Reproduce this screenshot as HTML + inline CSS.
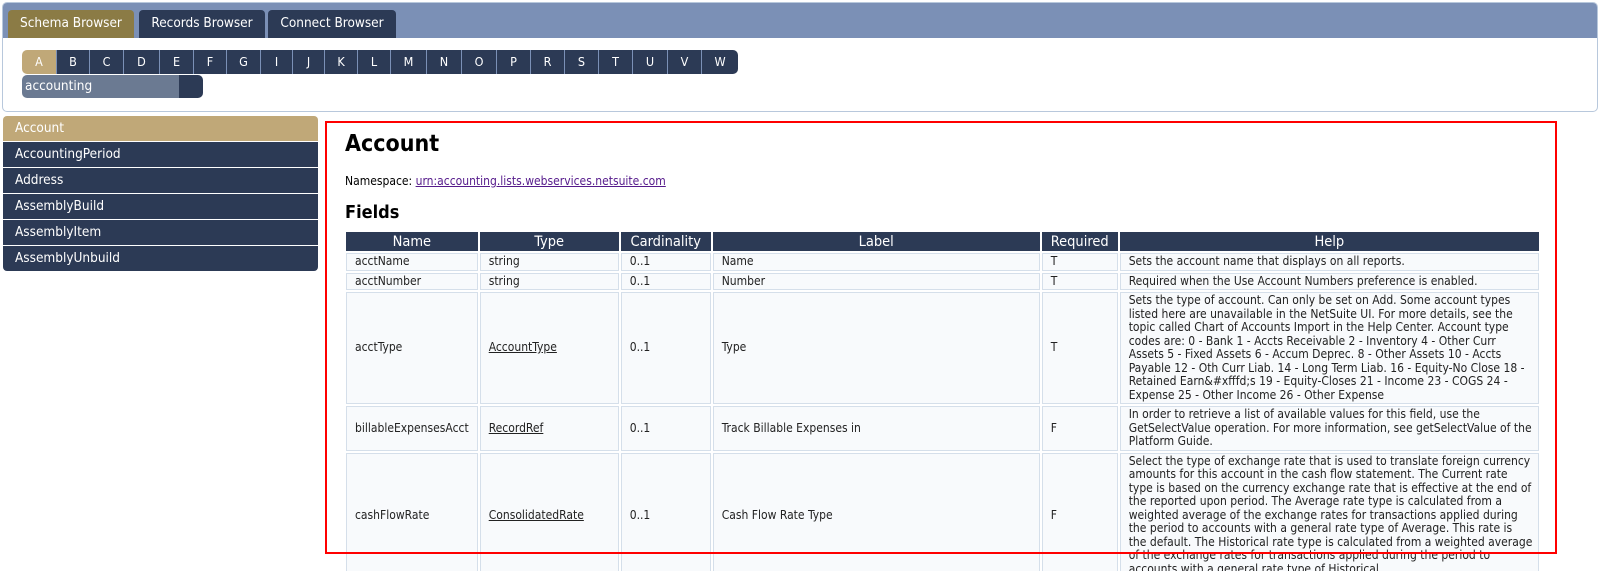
<!DOCTYPE html>
<html style="width:1600px;height:571px;overflow:hidden"><head><meta charset="utf-8"><style>
*{box-sizing:border-box;margin:0;padding:0}
body{width:1600px;height:571px;overflow:hidden;background:#fff;font-family:"DejaVu Sans Condensed","Liberation Sans",sans-serif;font-size:12px;color:#222;position:relative}
#wrap{position:absolute;left:0;top:0;width:1600px;height:571px;overflow:hidden}
.a{position:absolute}
#hdr{left:2px;top:2px;width:1596px;height:110px;border:1px solid #b8c8dc;border-radius:5px}
#tabbar{left:3px;top:3px;width:1594px;height:35px;background:#7b90b6;border-radius:4px 4px 0 0}
.tab{top:10px;height:28px;color:#fff;font-size:13.5px;line-height:27px;text-align:center;border-radius:4px 4px 0 0;background:#2c3a55}
.let{top:50px;height:24px;background:#2c3a55;color:#fff;font-size:12.5px;line-height:24px;text-align:center;border-right:1px solid #7b90b6}
.side{left:3px;width:315px;height:25px;background:#2c3a55;color:#fff;font-size:13.5px;line-height:24px;padding-left:12px}
#box{left:325px;top:121px;width:1232px;height:433px;border:2px solid #ff0000}
table{position:absolute;left:344px;top:230px;border-collapse:separate;border-spacing:2px;width:1197px}
th{background:#2c3a55;color:#fff;font-weight:normal;font-size:14.5px;height:19px;line-height:18px;padding:0}
td{background:#f8fafc;border:1px solid #d5dfea;padding:0 8px;line-height:13.5px;font-size:12px;vertical-align:middle;height:17px}
td.h{padding:1px 5px 1px 8px}
td a{color:#222}
</style></head><body><div id="wrap">
<div id="hdr" class="a"></div>
<div id="tabbar" class="a"></div>
<div class="a tab" style="left:8px;width:126px;background:#8b7b45">Schema Browser</div>
<div class="a tab" style="left:139px;width:126px">Records Browser</div>
<div class="a tab" style="left:268px;width:128px">Connect Browser</div>

<div class="a let" style="left:22px;width:35px;background:#c0a878;border-radius:5px 0 0 5px">A</div>
<div class="a let" style="left:57px;width:33px">B</div>
<div class="a let" style="left:90px;width:34px">C</div>
<div class="a let" style="left:124px;width:36px">D</div>
<div class="a let" style="left:160px;width:34px">E</div>
<div class="a let" style="left:194px;width:33px">F</div>
<div class="a let" style="left:227px;width:34px">G</div>
<div class="a let" style="left:261px;width:32px">I</div>
<div class="a let" style="left:293px;width:32px">J</div>
<div class="a let" style="left:325px;width:33px">K</div>
<div class="a let" style="left:358px;width:33px">L</div>
<div class="a let" style="left:391px;width:36px">M</div>
<div class="a let" style="left:427px;width:35px">N</div>
<div class="a let" style="left:462px;width:35px">O</div>
<div class="a let" style="left:497px;width:34px">P</div>
<div class="a let" style="left:531px;width:34px">R</div>
<div class="a let" style="left:565px;width:34px">S</div>
<div class="a let" style="left:599px;width:34px">T</div>
<div class="a let" style="left:633px;width:35px">U</div>
<div class="a let" style="left:668px;width:34px">V</div>
<div class="a let" style="left:702px;width:36px;border-radius:0 5px 5px 0;border-right:0">W</div>
<div class="a" style="left:22px;top:75px;width:157px;height:23px;background:#6b7a92;color:#fff;line-height:22px;padding-left:3px;border-radius:5px 0 0 5px;font-size:13.5px">accounting</div>
<div class="a" style="left:179px;top:75px;width:24px;height:23px;background:#2c3a55;border-radius:0 5px 5px 0"></div>

<div class="a side" style="top:116px;background:#c0a878;border-radius:4px 4px 0 0">Account</div>
<div class="a side" style="top:142px">AccountingPeriod</div>
<div class="a side" style="top:168px">Address</div>
<div class="a side" style="top:194px">AssemblyBuild</div>
<div class="a side" style="top:220px">AssemblyItem</div>
<div class="a side" style="top:246px;border-radius:0 0 4px 4px">AssemblyUnbuild</div>

<div class="a" style="left:345px;top:131px;font-size:23px;font-weight:bold;color:#000">Account</div>
<div class="a" style="left:345px;top:174px;font-size:12px;color:#000">Namespace: <a style="color:#551a8b" href="#">urn:accounting.lists.webservices.netsuite.com</a></div>
<div class="a" style="left:345px;top:202px;font-size:18px;font-weight:bold;color:#000">Fields</div>

<table>
<colgroup><col style="width:129px"><col style="width:139px"><col style="width:90px"><col style="width:327px"><col style="width:76px"><col></colgroup>
<tr><th>Name</th><th>Type</th><th>Cardinality</th><th>Label</th><th>Required</th><th>Help</th></tr>
<tr><td>acctName</td><td>string</td><td>0..1</td><td>Name</td><td>T</td><td class="h">Sets the account name that displays on all reports.</td></tr>
<tr><td>acctNumber</td><td>string</td><td>0..1</td><td>Number</td><td>T</td><td class="h">Required when the Use Account Numbers preference is enabled.</td></tr>
<tr><td>acctType</td><td><a href="#">AccountType</a></td><td>0..1</td><td>Type</td><td>T</td><td class="h">Sets the type of account. Can only be set on Add. Some account types listed here are unavailable in the NetSuite UI. For more details, see the topic called Chart of Accounts Import in the Help Center. Account type codes are: 0 - Bank 1 - Accts Receivable 2 - Inventory 4 - Other Curr Assets 5 - Fixed Assets 6 - Accum Deprec. 8 - Other Assets 10 - Accts Payable 12 - Oth Curr Liab. 14 - Long Term Liab. 16 - Equity-No Close 18 - Retained Earn&amp;#xfffd;s 19 - Equity-Closes 21 - Income 23 - COGS 24 - Expense 25 - Other Income 26 - Other Expense</td></tr>
<tr><td>billableExpensesAcct</td><td><a href="#">RecordRef</a></td><td>0..1</td><td>Track Billable Expenses in</td><td>F</td><td class="h">In order to retrieve a list of available values for this field, use the GetSelectValue operation. For more information, see getSelectValue of the Platform Guide.</td></tr>
<tr><td>cashFlowRate</td><td><a href="#">ConsolidatedRate</a></td><td>0..1</td><td>Cash Flow Rate Type</td><td>F</td><td class="h">Select the type of exchange rate that is used to translate foreign currency amounts for this account in the cash flow statement. The Current rate type is based on the currency exchange rate that is effective at the end of the reported upon period. The Average rate type is calculated from a weighted average of the exchange rates for transactions applied during the period to accounts with a general rate type of Average. This rate is the default. The Historical rate type is calculated from a weighted average of the exchange rates for transactions applied during the period to accounts with a general rate type of Historical.</td></tr>
</table>
<div id="box" class="a"></div>
</div></body></html>
